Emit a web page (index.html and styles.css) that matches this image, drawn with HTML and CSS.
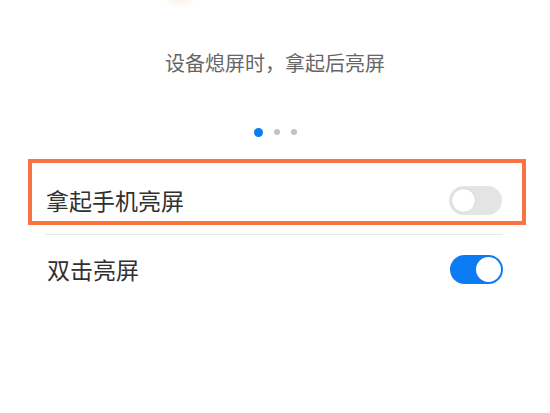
FILE: index.html
```html
<!DOCTYPE html>
<html lang="zh-CN">
<head>
<meta charset="utf-8">
<title>拿起手机亮屏</title>
<link rel="stylesheet" href="styles.css">
</head>
<body>
<div class="screen">
  <div class="illustration"><span class="blob"></span></div>
  <p class="caption">设备熄屏时，拿起后亮屏</p>
  <div class="dots">
    <span class="dot active"></span>
    <span class="dot"></span>
    <span class="dot"></span>
  </div>
  <div class="highlight">
    <div class="row row-first">
      <span class="label">拿起手机亮屏</span>
      <span class="switch"><span class="knob"></span></span>
    </div>
  </div>
  <div class="divider"></div>
  <div class="row row-second">
    <span class="label">双击亮屏</span>
    <span class="switch on"><span class="knob"></span></span>
  </div>
</div>
</body>
</html>
```
FILE: styles.css
```css
html, body {
  margin: 0;
  padding: 0;
  background: #ffffff;
}
body {
  font-family: "Noto Sans CJK SC", "Noto Sans", sans-serif;
  width: 550px;
  height: 413px;
  overflow: hidden;
}
.screen {
  display: flex;
  flex-direction: column;
}
.illustration {
  height: 40px;
  display: flex;
  justify-content: flex-start;
  padding-left: 163px;
  overflow: hidden;
}
.blob {
  width: 34px;
  height: 20px;
  margin-top: -11px;
  border-radius: 50%;
  background: radial-gradient(ellipse at center, rgba(250, 228, 200, 0.55) 0%, rgba(252, 240, 225, 0.3) 45%, rgba(255, 255, 255, 0) 72%);
}
.caption {
  margin: 9px 0 0;
  height: 28px;
  line-height: 28px;
  font-size: 20px;
  color: #666666;
  text-align: center;
  letter-spacing: 0;
}
.dots {
  margin-top: 51px;
  height: 8px;
  display: flex;
  align-items: center;
  gap: 11px;
  padding-left: 254px;
}
.dot {
  width: 6px;
  height: 6px;
  border-radius: 50%;
  background: #c2c2c2;
}
.dot.active {
  width: 9px;
  height: 9px;
  background: #0a7bf2;
}
.highlight {
  margin: 23px 0 0 28px;
  width: 498px;
  box-sizing: border-box;
  border: 4px solid #f8733f;
  padding: 22px 20px 6px 14px;
}
.row {
  display: flex;
  align-items: center;
  justify-content: space-between;
}
.label {
  font-size: 23px;
  line-height: 30px;
  color: #303030;
}
.switch {
  width: 53px;
  height: 29px;
  border-radius: 15px;
  background: #e4e4e4;
  box-sizing: border-box;
  padding: 2px;
  display: flex;
  align-items: center;
  justify-content: flex-start;
}
.switch .knob {
  width: 25px;
  height: 25px;
  border-radius: 50%;
  background: #ffffff;
  box-sizing: border-box;
  border: 1px solid #d6d6d6;
}
.switch.on {
  background: #0c7cf5;
  justify-content: flex-end;
}
.switch.on .knob {
  border: none;
}
.divider {
  margin: 9px 0 0 45px;
  width: 458px;
  height: 1px;
  background: #e6e6e6;
}
.row-second {
  margin-top: 19px;
  padding: 0 47px 0 47px;
}
```
